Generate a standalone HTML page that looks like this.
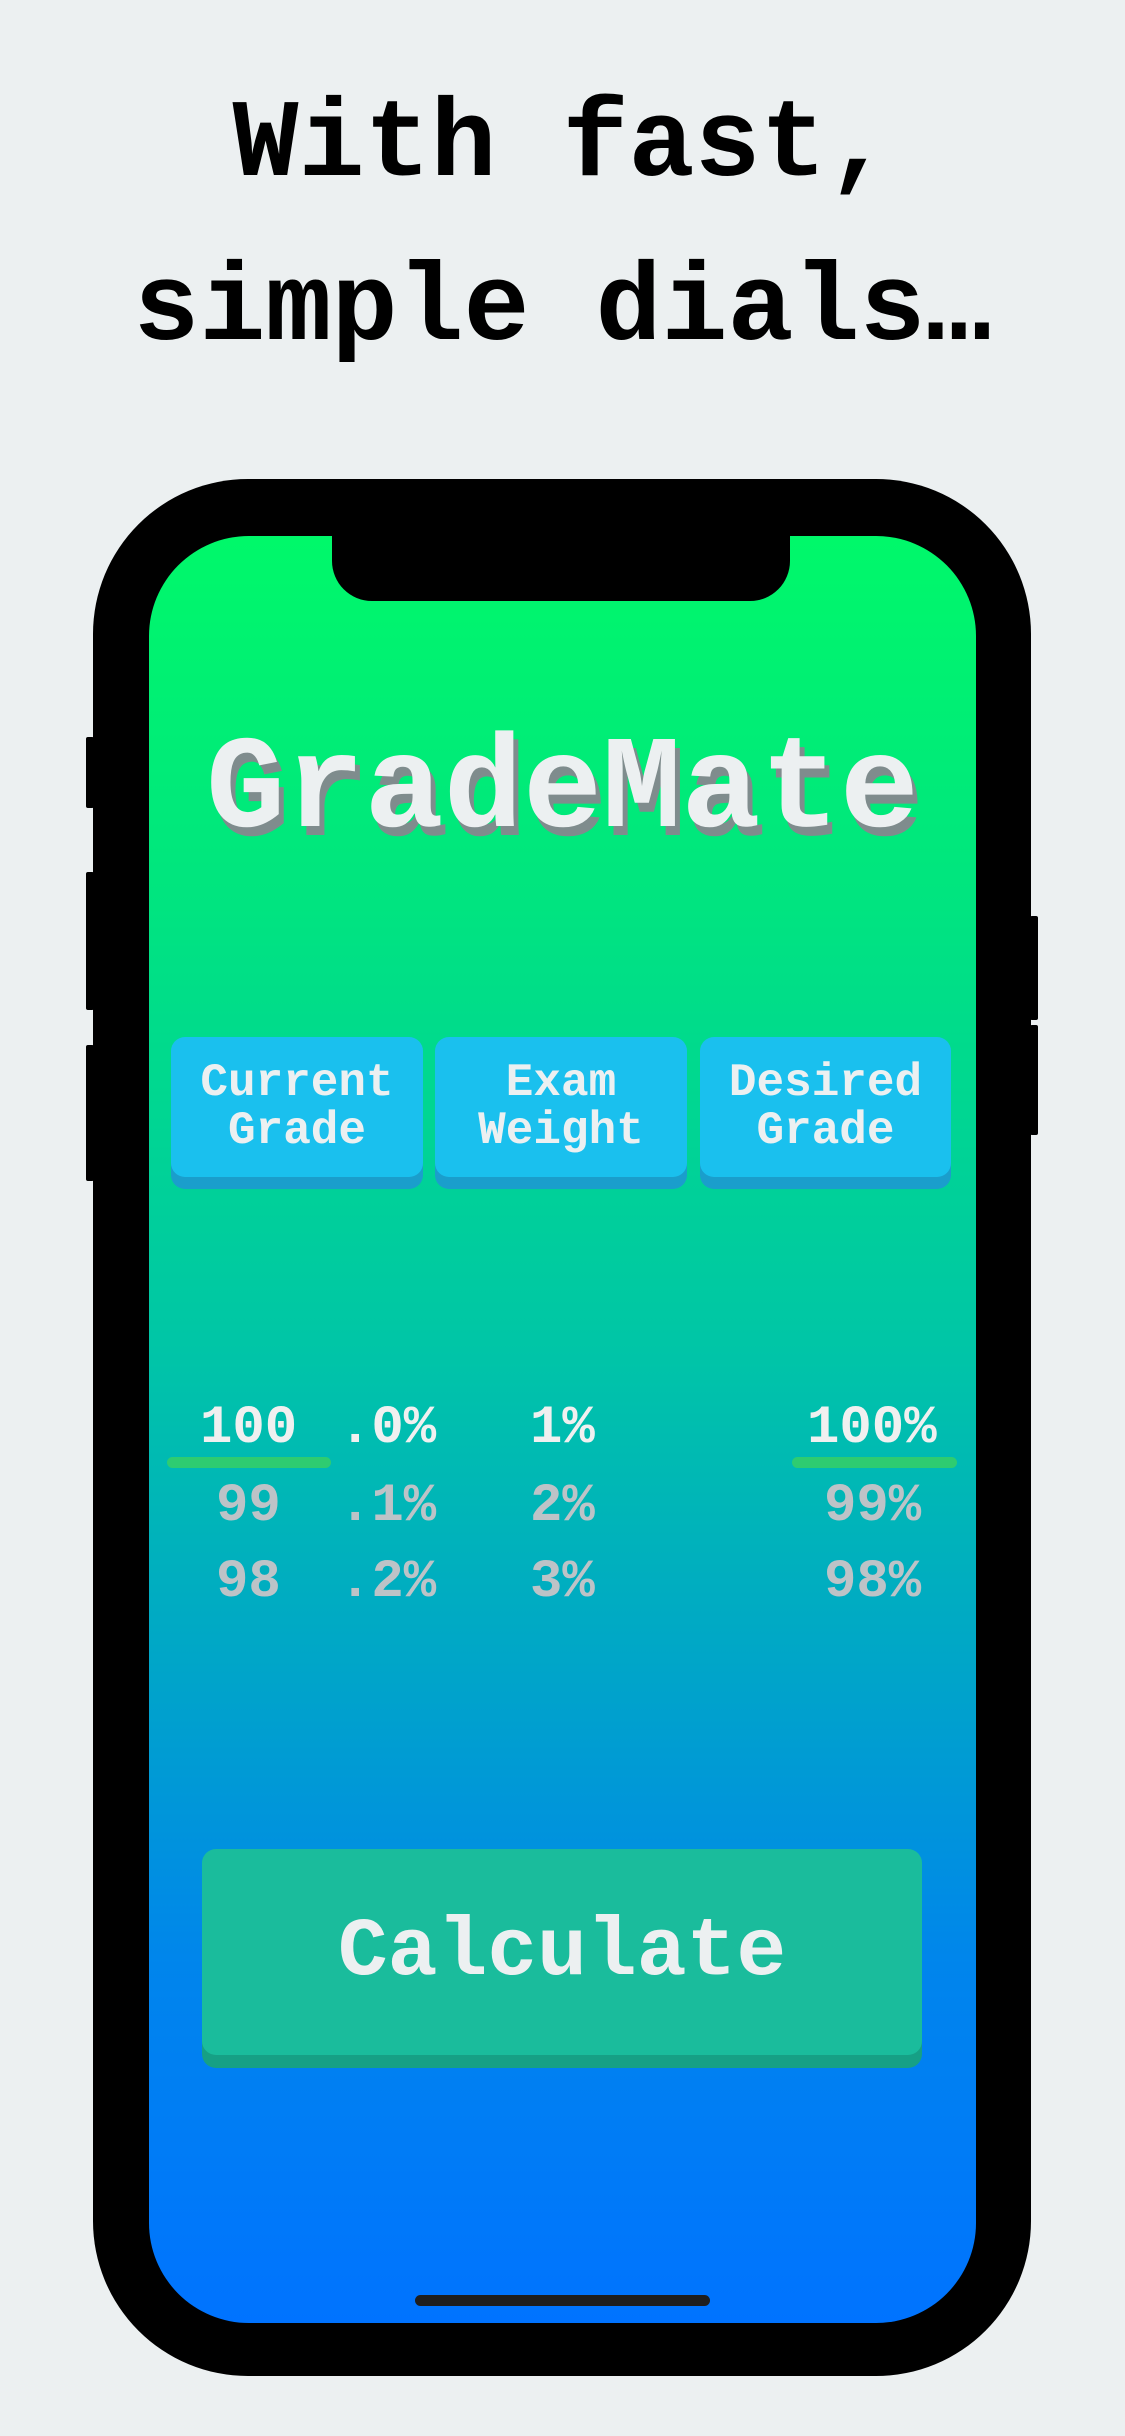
<!DOCTYPE html>
<html><head><meta charset="utf-8"><style>
*{margin:0;padding:0;box-sizing:border-box}
body{width:1125px;height:2436px;background:#ecf0f1;position:relative;overflow:hidden;font-family:"Liberation Mono","Courier New",monospace;font-weight:bold}
.a{position:absolute}
.h{left:0;width:1125px;text-align:center;font-size:110px;color:#000;line-height:1}
.phone{left:93px;top:479px;width:938px;height:1897px;background:#000;border-radius:155px}
.screen{left:149px;top:536px;width:827px;height:1787px;border-radius:100px;background:linear-gradient(#00f86a 0%,#00e57f 20%,#00c6a6 45%,#00a2cc 65%,#0085ec 80%,#0073ff 100%);overflow:hidden}
.notch{left:332px;top:530px;width:458px;height:71px;background:#000;border-radius:0 0 40px 40px}
.btn{background:#1ac0ee;border-radius:14px;box-shadow:0 12px 0 #1a9ecc;color:#ecf0f1;font-size:46px;text-align:center;line-height:48px;padding-top:22px}
.n{font-size:54px;line-height:1;color:#bdc3c7}
.w{color:#f0f0f0}
.sb{background:#000;border-radius:2px}
</style></head><body>
<div class="a h" style="top:92px">With fast,</div>
<div class="a h" style="top:256px">simple dials…</div>
<div class="a sb" style="left:86px;top:737px;width:8px;height:71px"></div>
<div class="a sb" style="left:86px;top:872px;width:8px;height:138px"></div>
<div class="a sb" style="left:86px;top:1045px;width:8px;height:136px"></div>
<div class="a sb" style="left:1030px;top:916px;width:8px;height:104px"></div>
<div class="a sb" style="left:1030px;top:1025px;width:8px;height:110px"></div>
<div class="a phone"></div>
<div class="a screen"></div>
<div class="a notch"></div>
<div class="a" style="left:0;width:1125px;top:725px;text-align:center;font-size:132px;color:#ecf0f1;text-shadow:5px 9px 0 #7f8c8d;line-height:1">GradeMate</div>
<div class="a btn" style="left:171px;top:1037px;width:252px;height:140px">Current<br>Grade</div>
<div class="a btn" style="left:435px;top:1037px;width:252px;height:140px">Exam<br>Weight</div>
<div class="a btn" style="left:700px;top:1037px;width:251px;height:140px">Desired<br>Grade</div>
<div class="a n w" style="left:200px;top:1402px">100</div>
<div class="a n w" style="left:339px;top:1402px">.0%</div>
<div class="a n w" style="left:530px;top:1402px">1%</div>
<div class="a n w" style="left:807px;top:1402px">100%</div>
<div class="a n" style="left:216px;top:1480px">99</div>
<div class="a n" style="left:339px;top:1480px">.1%</div>
<div class="a n" style="left:530px;top:1480px">2%</div>
<div class="a n" style="left:824px;top:1480px">99%</div>
<div class="a n" style="left:216px;top:1556px">98</div>
<div class="a n" style="left:339px;top:1556px">.2%</div>
<div class="a n" style="left:530px;top:1556px">3%</div>
<div class="a n" style="left:824px;top:1556px">98%</div>
<div class="a" style="left:167px;top:1457px;width:164px;height:11px;border-radius:6px;background:#2ecc71"></div>
<div class="a" style="left:792px;top:1457px;width:165px;height:11px;border-radius:6px;background:#2ecc71"></div>
<div class="a" style="left:202px;top:1849px;width:720px;height:206px;background:#1abc9c;border-radius:14px;box-shadow:0 13px 0 #16a085;color:#ecf0f1;font-size:83px;text-align:center;line-height:206px">Calculate</div>
<div class="a" style="left:415px;top:2295px;width:295px;height:11px;border-radius:6px;background:#1e1e1e"></div>
</body></html>
